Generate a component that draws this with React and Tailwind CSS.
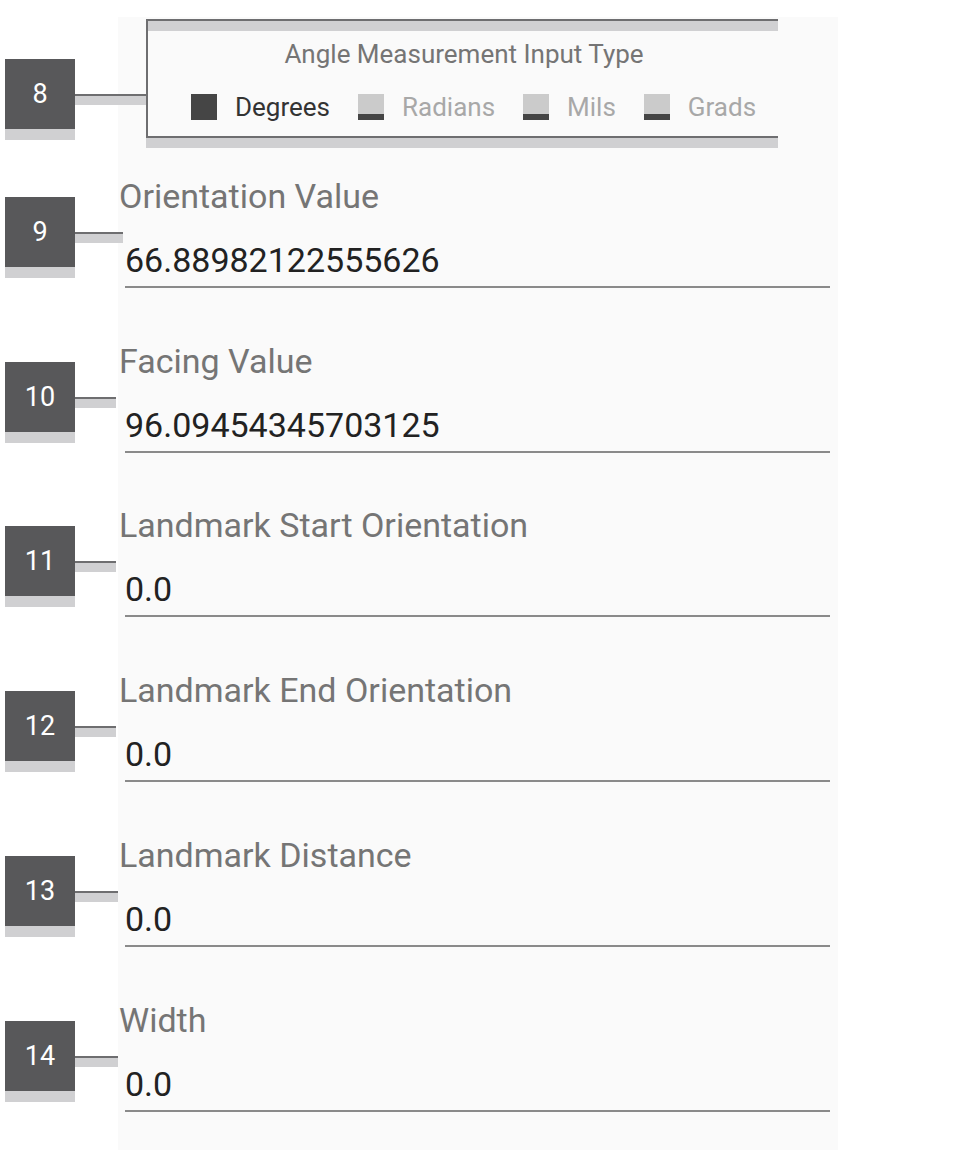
const F = { fontFamily: "Roboto, 'Liberation Sans', sans-serif" };

function Badge({ n, top, left, lineW, lineTop }) {
  return (
    <div className="absolute flex" style={{ left, top }}>
      <div className="flex flex-col">
        <div className="w-[70px] h-[70px] bg-[#58585a] text-white text-[27px] flex items-center justify-center">{n}</div>
        <div className="w-[70px] h-[11px] bg-[#d0d0d2]"></div>
      </div>
      <div className="flex flex-col" style={{ marginTop: lineTop, width: lineW }}>
        <div className="h-[2px] bg-[#6e6e70]"></div>
        <div className="h-[9px] bg-[#d0d0d2]"></div>
      </div>
    </div>
  );
}

function Opt({ label, active }) {
  return (
    <div className="flex items-center gap-[18px]">
      {active ? (
        <div className="w-[26px] h-[26px] bg-[#454545]"></div>
      ) : (
        <div className="w-[26px] h-[26px] bg-[#cbcbcb] flex flex-col justify-end"><div className="h-[6px] bg-[#454545]"></div></div>
      )}
      <span className={active ? "text-[#333] text-[26px]" : "text-[#a8a8a8] text-[26px]"}>{label}</span>
    </div>
  );
}

function Field({ n, label, value, mt, lineW }) {
  return (
    <div className="relative" style={{ marginTop: mt }}>
      <Badge n={n} top={19} left={-113} lineW={lineW} lineTop={35} />
      <div className="text-[34px] leading-[36px] text-[#757575] pl-[1px]">{label}</div>
      <div className="mt-[28px] text-[34px] leading-[36px] text-[#222] pl-[7px]">{value}</div>
      <div className="mt-[8px] ml-[7px] w-[705px] h-[2px] bg-[#8a8a8a]"></div>
    </div>
  );
}

export default function App() {
  const fields = [
    [9, "Orientation Value", "66.88982122555626", 30, 48],
    [10, "Facing Value", "96.09454345703125", 55, 41],
    [11, "Landmark Start Orientation", "0.0", 54, 41],
    [12, "Landmark End Orientation", "0.0", 55, 41],
    [13, "Landmark Distance", "0.0", 55, 43],
    [14, "Width", "0.0", 55, 43],
  ];
  return (
    <div className="w-[956px] h-[1160px] bg-white pt-[17px] pl-[118px]" style={F}>
      <div className="w-[720px] h-[1133px] bg-[#fafafa] relative">
        <div className="relative ml-[28px] pt-[2px]">
          <Badge n={8} top={42} left={-141} lineW={71} lineTop={35} />
          <div className="w-[632px] border-l-2 border-t-2 border-b-2 border-[#6e6e70]">
            <div className="h-[10px] bg-[#d0d0d2]"></div>
            <div className="text-center text-[26px] text-[#757575] mt-[8px] leading-[30px] pl-[2px]">Angle Measurement Input Type</div>
            <div className="flex items-center gap-[28px] pl-[43px] mt-[18px] h-[40px]">
              <Opt label="Degrees" active />
              <Opt label="Radians" />
              <Opt label="Mils" />
              <Opt label="Grads" />
            </div>
            <div className="h-[9px]"></div>
          </div>
          <div className="w-[632px] h-[10px] bg-[#d0d0d2]"></div>
        </div>
        {fields.map(([n, l, v, mt, w]) => (
          <Field key={n} n={n} label={l} value={v} mt={mt} lineW={w} />
        ))}
      </div>
    </div>
  );
}
